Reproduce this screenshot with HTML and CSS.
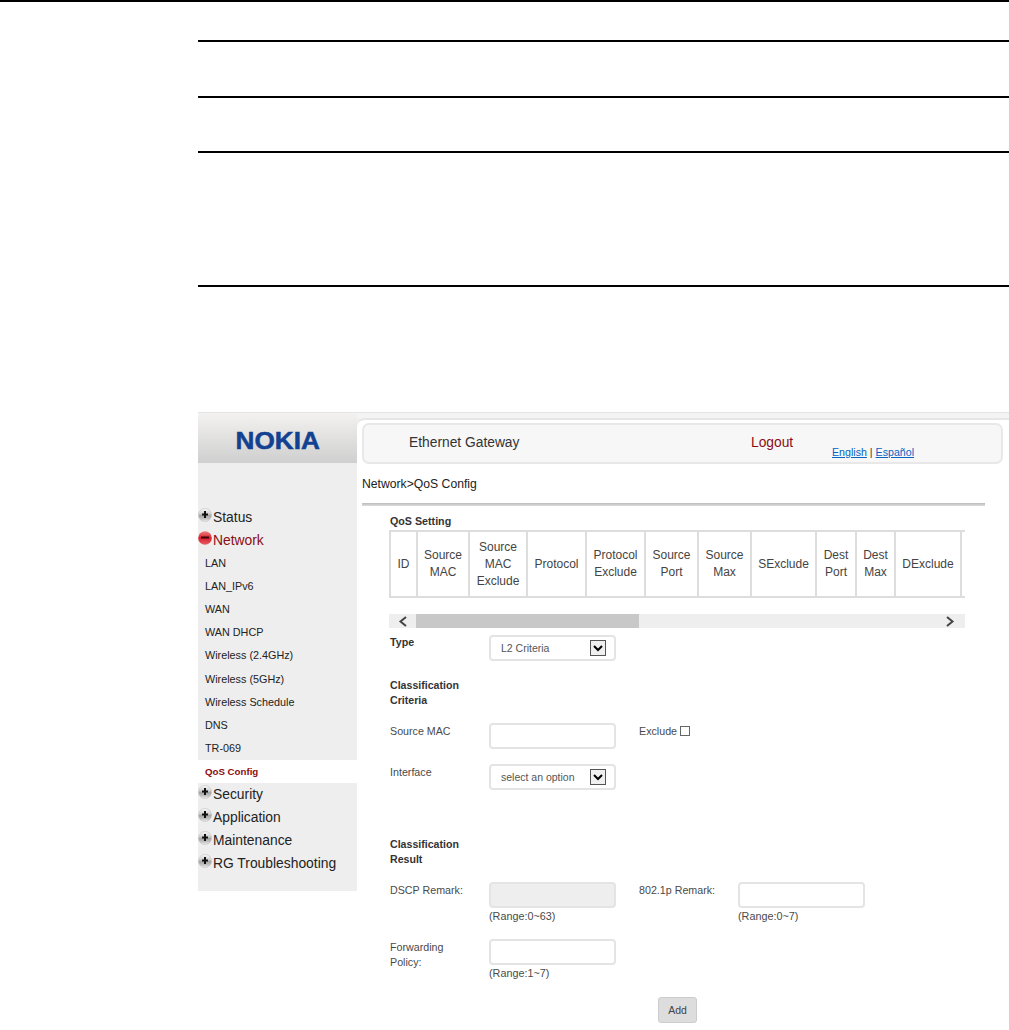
FILE: index.html
```html
<!DOCTYPE html>
<html lang="en">
<head>
<meta charset="utf-8">
<title>QoS Config</title>
<link rel="stylesheet" href="styles.css">
</head>
<body>
<svg class="defs" width="0" height="0" aria-hidden="true">
  <defs>
    <linearGradient id="grey" x1="0" y1="0" x2="0" y2="1"><stop offset="0" stop-color="#fafafa"/><stop offset=".4" stop-color="#d0d0d0"/><stop offset=".55" stop-color="#a4a4a4"/><stop offset=".8" stop-color="#c4c4c4"/><stop offset="1" stop-color="#eeeeee"/></linearGradient>
    <linearGradient id="red" x1="0" y1="0" x2="0" y2="1"><stop offset="0" stop-color="#f08080"/><stop offset=".5" stop-color="#d81f2c"/><stop offset="1" stop-color="#e8606a"/></linearGradient>
    <symbol id="plus" viewBox="0 0 14 14"><circle cx="7" cy="7" r="6.600" fill="url(#grey)" stroke="#c4c4c4" stroke-width=".6"/><path d="M7 3v7M4 6.500h6" stroke="#111" stroke-width="2" fill="none"/></symbol>
    <symbol id="minus" viewBox="0 0 14 14"><circle cx="7" cy="7" r="6.800" fill="url(#red)"/><path d="M3 6.500h8" stroke="#3a0508" stroke-width="2" fill="none"/></symbol>
    <symbol id="caret" viewBox="0 0 16 16"><rect x=".5" y=".5" width="15" height="15" fill="#f0f0f0" stroke="#555"/><path d="M4 6l4 4 4-4" stroke="#000" stroke-width="2" fill="none"/></symbol>
  </defs>
</svg>
<hr class="rule rule-top">
<div class="doc">
  <hr class="rule rule-a">
  <hr class="rule rule-b">
  <hr class="rule rule-c">
  <hr class="rule rule-d">
  <div class="screen">
    <aside class="sidebar">
      <div class="logo"><span class="logo-word">NOKIA</span></div>
      <nav class="nav">
        <div class="nav-top"><svg class="ico"><use href="#plus"/></svg>Status</div>
        <div class="nav-top nav-open"><svg class="ico"><use href="#minus"/></svg>Network</div>
        <div class="nav-sub">LAN</div>
        <div class="nav-sub">LAN_IPv6</div>
        <div class="nav-sub">WAN</div>
        <div class="nav-sub">WAN DHCP</div>
        <div class="nav-sub">Wireless (2.4GHz)</div>
        <div class="nav-sub">Wireless (5GHz)</div>
        <div class="nav-sub">Wireless Schedule</div>
        <div class="nav-sub">DNS</div>
        <div class="nav-sub">TR-069</div>
        <div class="nav-sub nav-current">QoS Config</div>
        <div class="nav-top"><svg class="ico"><use href="#plus"/></svg>Security</div>
        <div class="nav-top"><svg class="ico"><use href="#plus"/></svg>Application</div>
        <div class="nav-top"><svg class="ico"><use href="#plus"/></svg>Maintenance</div>
        <div class="nav-top"><svg class="ico"><use href="#plus"/></svg>RG Troubleshooting</div>
      </nav>
    </aside>
    <main class="main">
      <div class="band"></div>
      <div class="panel">
        <header class="head">
          <span class="head-title">Ethernet Gateway</span>
          <span class="head-logout">Logout</span>
          <span class="head-lang"><a href="#">English</a> | <a href="#">Español</a></span>
        </header>
        <div class="crumb">Network&gt;QoS Config</div>
        <div class="divider"></div>
        <section class="content">
          <h2 class="sec-title">QoS Setting</h2>
          <div class="table-clip">
            <table class="grid">
              <colgroup>
                <col width="27"><col width="52"><col width="58"><col width="59"><col width="59"><col width="53"><col width="53"><col width="65"><col width="40"><col width="39"><col width="66"><col width="60">
              </colgroup>
              <tr>
                <th>ID</th><th>Source<br>MAC</th><th>Source<br>MAC<br>Exclude</th><th>Protocol</th><th>Protocol<br>Exclude</th><th>Source<br>Port</th><th>Source<br>Max</th><th>SExclude</th><th>Dest<br>Port</th><th>Dest<br>Max</th><th>DExclude</th><th></th>
              </tr>
            </table>
          </div>
          <div class="scroll">
            <span class="scroll-btn"><svg width="10" height="11" viewBox="0 0 10 11"><path d="M8 1L2.500 5.500 8 10" stroke="#444" stroke-width="2" fill="none"/></svg></span>
            <span class="scroll-thumb"></span>
            <span class="scroll-btn scroll-end"><svg width="10" height="11" viewBox="0 0 10 11"><path d="M2 1l5.500 4.500L2 10" stroke="#444" stroke-width="2" fill="none"/></svg></span>
          </div>
          <div class="row row-type">
            <div class="lab lab-strong">Type</div>
            <div class="field select"><span>L2 Criteria</span><svg class="caret"><use href="#caret"/></svg></div>
          </div>
          <h3 class="sub-title sub-criteria">Classification<br>Criteria</h3>
          <div class="row row-next">
            <div class="lab">Source MAC</div>
            <div class="field"></div>
            <div class="lab lab-second lab-check">Exclude <span class="check"></span></div>
          </div>
          <div class="row row-next">
            <div class="lab">Interface</div>
            <div class="field select"><span>select an option</span><svg class="caret"><use href="#caret"/></svg></div>
          </div>
          <h3 class="sub-title sub-result">Classification<br>Result</h3>
          <div class="row row-next">
            <div class="lab">DSCP Remark:</div>
            <div><div class="field field-off"></div><div class="hint">(Range:0~63)</div></div>
            <div class="lab lab-second">802.1p Remark:</div>
            <div><div class="field"></div><div class="hint">(Range:0~7)</div></div>
          </div>
          <div class="row row-next">
            <div class="lab">Forwarding<br>Policy:</div>
            <div><div class="field"></div><div class="hint">(Range:1~7)</div></div>
          </div>
          <button class="add" type="button">Add</button>
        </section>
      </div>
    </main>
  </div>
</div>
</body>
</html>
```
FILE: styles.css
```css
html, body { margin: 0; padding: 0; background: #fff; height: 1030px; overflow: hidden; }
body { font-family: "Liberation Sans", Arial, sans-serif; color: #333; }
.defs { position: absolute; }

.rule { border: 0; height: 2px; background: #000; margin: 0; }
.doc { margin-left: 198px; }
.rule-a { margin-top: 38px; }
.rule-b { margin-top: 54px; }
.rule-c { margin-top: 53px; }
.rule-d { margin-top: 132px; }

.screen { margin-top: 125px; height: 618px; display: flex; overflow: hidden; }

/* sidebar */
.sidebar { width: 159px; flex: none; height: 479px; background: #eee; border-top: 1px solid #e4e4e4; box-sizing: border-box; }
.logo { height: 50px; box-sizing: border-box; padding: 5px 0 0 0; display: flex; align-items: center; justify-content: center; background: linear-gradient(#f3f2f0, #cfcfcf); color: #124191; font-weight: bold; font-size: 24px; }
.logo-word { display: inline-block; transform: scaleX(1.09); -webkit-text-stroke: .5px #124191; }
.nav { padding-top: 42.900px; }
.nav-top { height: 23.100px; line-height: 23px; font-size: 13.850px; color: #222; display: flex; }
.nav-open { color: #8b0d12; }
.ico { width: 14px; height: 14px; margin: 2px 1px 0 0; flex: none; }
.nav-sub { height: 23.100px; line-height: 23px; padding-left: 7px; font-size: 10.800px; color: #222; }
.nav-current { background: #fff; color: #8b0d12; font-weight: bold; font-size: 9.700px; }

/* main */
.main { flex: 1; min-width: 0; background: #efefef; display: flex; flex-direction: column; }
.band { height: 6px; flex: none; background: #f4f4f4; border-top: 1px solid #e4e4e4; box-sizing: border-box; }
.panel { flex: 1; background: #fff; border-top: 2px solid #e6e6e6; border-top-left-radius: 8px; }

.head { margin: 3px 6px 0 5px; height: 41px; box-sizing: border-box; background: #f7f7f7; border: 2px solid #e8e8e8; border-radius: 7px; display: grid; grid-template-columns: 342px 81px auto; padding: 0 0 3px 45px; align-items: center; font-size: 13.800px; color: #333; }
.head-logout { color: #8b0d12; }
.head-lang { font-size: 10.650px; align-self: end; margin-bottom: 1px; color: #333; }
.head-lang a { color: #0563c1; }

.crumb { margin: 12px 0 0 5px; font-size: 12.200px; line-height: 17px; color: #222; }
.divider { margin: 10px 24px 0 5px; height: 3px; background: linear-gradient(#bbb, #ddd); }

.content { padding-left: 32px; }
.sec-title { margin: 8px 0 0 1px; font-size: 10.700px; line-height: 15px; font-weight: bold; color: #333; }
.table-clip { width: 576px; height: 69px; margin-top: 1px; overflow: hidden; }
.grid { table-layout: fixed; border-collapse: collapse; width: 631px; height: 68px; }
.grid th { border: 2px solid #ddd; padding: 0; font-weight: normal; font-size: 12px; line-height: 17px; color: #444; text-align: center; overflow: hidden; white-space: nowrap; }

.scroll { margin-top: 15px; width: 576px; height: 14px; background: #eee; display: flex; align-items: center; }
.scroll-btn { width: 27px; height: 14px; flex: none; display: flex; align-items: center; justify-content: center; }
.scroll-thumb { width: 223px; height: 14px; background: #c8c8c8; flex: none; }
.scroll-end { margin-left: auto; width: 31px; }

.row { display: grid; grid-template-columns: 100px 127px 23px 99px 127px; line-height: 15px; color: #4a4a4a; }
.row > .lab-second { grid-column: 4; }
.row > .lab-second + div { grid-column: 5; }
.lab { font-size: 10.700px; padding: 1px 0 0 1px; white-space: nowrap; }
.lab-second { padding-left: 0; }
.lab-strong { font-weight: bold; color: #333; padding-top: 0; }
.lab-check { display: flex; align-items: center; height: 16px; gap: 3px; padding-top: 0; }
.row-type { margin-top: 7px; }
.row-next { margin-top: 15px; }

.sub-title { margin: 0 0 0 1px; width: 100px; font-size: 10.600px; line-height: 15px; font-weight: bold; color: #333; }
.sub-criteria { margin-top: 17px; }
.sub-result { margin-top: 47px; }

.field { width: 127px; height: 26px; box-sizing: border-box; background: #fff; border: 2px solid #e4e4e4; border-radius: 4px; }
.field-off { background: #eee; }
.select { display: flex; align-items: center; justify-content: space-between; padding: 0 8px 0 10px; font-size: 10.500px; color: #555; }
.caret { width: 16px; height: 16px; flex: none; }
.check { display: inline-block; width: 10px; height: 10px; box-sizing: border-box; border: 1px solid #666; background: #fff; }
.hint { margin-top: 1px; font-size: 10.800px; line-height: 15px; color: #4a4a4a; }

.add { display: block; margin: 16px 0 0 269px; width: 39px; height: 26px; padding: 0; background: #ddd; border: 1px solid #ccc; border-radius: 3px; font-family: inherit; font-size: 10.500px; color: #444; }
```
